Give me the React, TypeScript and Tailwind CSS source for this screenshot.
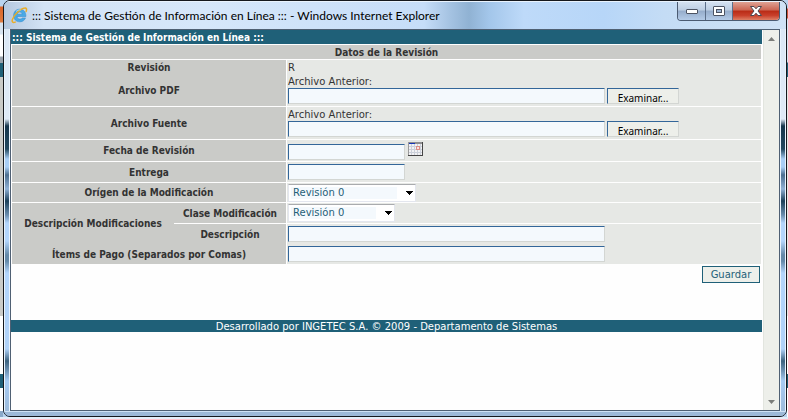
import type { ReactNode } from "react";

const label = "flex items-center justify-center bg-[#cacbc8] text-center font-bold font-['DejaVu_Sans_Condensed','DejaVu_Sans',sans-serif]";
const value = "flex flex-1 bg-[#e6e8e5]";
const box =
  "h-4 border border-t-[#336699] border-l-[#336699] border-r-[#d3d6d3] border-b-[#d3d6d3] bg-[#f4f9fd] px-1 text-[10px] text-[#336699] outline-none";

function Row({
  id,
  text,
  height,
  align = "items-center",
  children,
}: {
  id: string;
  text: string;
  height: string;
  align?: string;
  children: ReactNode;
}) {
  return (
    <div className={`flex gap-px ${height}`}>
      <label htmlFor={id} className={`${label} w-[274px] shrink-0`}>
        {text}
      </label>
      <div className={`${value} ${align} pl-px`}>{children}</div>
    </div>
  );
}

function FileField({ id }: { id: string }) {
  return (
    <div className="flex flex-col">
      <span className="leading-[13px]">Archivo Anterior:</span>
      <div className="flex gap-0.5">
        <input id={id} type="text" className={`${box} w-[317px]`} />
        <button
          type="button"
          className="h-4 w-[72px] border border-t-[#336699] border-l-[#336699] border-r-[#d3d6d3] border-b-[#d3d6d3] bg-[#edefea] pt-1 text-[10px] leading-[11px] text-black font-['Noto_Sans',sans-serif]"
        >
          Examinar...
        </button>
      </div>
    </div>
  );
}

function Combo({ id, width }: { id: string; width: string }) {
  return (
    <div className={`relative h-[18px] ${width} border border-[#e3e6ee] border-t-[#a9abae] bg-white`}>
      <select
        id={id}
        className="block h-full w-full appearance-none bg-[#f4f9fd] bg-clip-content py-0.5 pr-[18px] pl-0.5 indent-[2px] text-[10px] leading-3 text-[#1f6078] outline-none"
      >
        <option>Revisión 0</option>
      </select>
      <svg className="pointer-events-none absolute top-[6px] right-[2px]" width="8" height="4" viewBox="0 0 8 4" shapeRendering="crispEdges" aria-hidden="true">
        <path d="M0 0H8L4 4Z" fill="#000" />
      </svg>
    </div>
  );
}

function Calendar() {
  return (
    <svg width="15" height="14" viewBox="0 0 15 14" shapeRendering="crispEdges" aria-hidden="true">
      <rect width="15" height="14" fill="#f2f2f4" />
      <path d="M0 0H15V2H0Z" fill="#8e8e90" />
      <path d="M1 1H7V2H1Z" fill="#1737b8" />
      <path d="M1 4.500H14M1 7.500H14M1 10.500H14M3.500 2V13M6.500 2V13M9.500 2V13M12.500 2V13" stroke="#ccd1da" />
      <path d="M8 4H12V8H8Z" fill="#df8f87" />
      <path d="M9 5H11V7H9Z" fill="#f7e4e1" />
      <path d="M.5 0V14" stroke="#9a9a9c" />
      <path d="M14.500 0V14M0 13.500H15" stroke="#454545" />
    </svg>
  );
}

function Logo() {
  return (
    <svg width="17" height="17" viewBox="0 0 17 17" aria-hidden="true">
      <path d="M8.600 2.200C4.900 2.200 2.600 5 2.600 8.600s2.500 6.200 6.200 6.200c2.800 0 4.900-1.500 5.700-3.900h-3.300c-.5.800-1.300 1.200-2.300 1.200-1.600 0-2.700-1-2.800-2.600h8.800C15 5 12.700 2.200 8.600 2.200ZM6.200 7.200C6.500 5.800 7.400 5 8.700 5s2.200.8 2.400 2.200Z" fill="#49a9e6" stroke="#2f86c8" strokeWidth=".5" />
      <path d="M15.100 4.500C16 2.300 15.500.8 13.700 1.100 9.800 1.600 3.200 7.400 1.500 12.200.6 14.700 1.800 16.100 4.200 15.100" fill="none" stroke="#e9ad26" strokeWidth="1.500" strokeLinecap="round" />
      <path d="M5 4.500C6.500 3.200 8 2.800 9.700 3" fill="none" stroke="#b7e3fb" strokeWidth=".8" />
    </svg>
  );
}

function WindowButtons() {
  const cool = "flex h-full items-center justify-center bg-[linear-gradient(#d5e2f1_0%,#bccde2_45%,#95accb_50%,#b4cbe7_100%)]";
  return (
    <div className="flex h-[19px] w-[103px] overflow-hidden rounded-b-[4px] border border-t-0 border-[#4b5b72]">
      <button type="button" aria-label="Minimizar" className={`${cool} w-7 border-r border-[#5c6f8a]`}>
        <svg width="12" height="5" viewBox="0 0 12 5" aria-hidden="true">
          <rect x=".5" y=".5" width="11" height="4" rx=".5" fill="#fff" stroke="#4c5362" />
        </svg>
      </button>
      <button type="button" aria-label="Maximizar" className={`${cool} w-[27px] border-r border-[#5c6f8a]`}>
        <svg width="12" height="10" viewBox="0 0 12 10" aria-hidden="true">
          <rect x=".5" y=".5" width="11" height="9" rx=".5" fill="#fff" stroke="#4c5362" />
          <rect x="3.500" y="3.500" width="5" height="3" fill="#9db5d4" stroke="#4c5362" />
        </svg>
      </button>
      <button
        type="button"
        aria-label="Cerrar"
        className="flex h-full flex-1 items-center justify-center bg-[linear-gradient(#dfa294_0%,#cc6552_45%,#b92b16_50%,#c9402b_75%,#dd8066_100%)]"
      >
        <svg width="12" height="10" viewBox="0 0 12 10" aria-hidden="true">
          <path d="M.5.5H4L6 2.800 8 .5H11.500L8 5 11.500 9.500H8L6 7.200 4 9.500H.5L4 5Z" fill="#fff" stroke="#4c4650" strokeLinejoin="round" />
        </svg>
      </button>
    </div>
  );
}

const side =
  "w-1.5 shrink-0 border-x border-[#e9f3fd] bg-[linear-gradient(#dbe8f6_0px,#dfeaf6_90px,#16364c_97px,#23485f_120px,#a9cef5_130px,#a9cef5_138px,#4d6f90_146px,#8fb0d4_160px,#1c4059_172px,#6a8dae_186px,#b3d5fb_194px,#b3d5fb_212px,#6489a8_226px,#6489a8_232px,#b3d5fb_244px,#b0d2f8_320px,#3d637f_332px,#6f93b5_342px,#a6cbf3_352px,#9dbbdb_100%)]";

export default function App() {
  return (
    <div className="flex h-screen min-h-[419px] flex-col bg-[#b9d3ee] text-[10px] text-[#333] font-['DejaVu_Sans',sans-serif]">
      <div className="flex min-h-0 flex-1">
        <div className="w-[3px] shrink-0 bg-[linear-gradient(#b9d3ee_0px,#b9d3ee_6px,#d9662b_7px,#e07a3d_22px,#d8e4f0_23px,#d8e4f0_34px,#fff_35px,#fff_56px,#9aa3ad_57px,#9aa3ad_63px,#1f6078_63px,#1f6078_77px,#cacbc8_77px,#cacbc8_316px,#fff_316px,#fff_374px,#1f6078_374px,#1f6078_388px,#fff_388px,#fff_411px,#8ba9c9_411px)]" />

        <main className="flex min-w-0 flex-1 flex-col overflow-hidden rounded-[7px] border border-[#15181d] bg-[#bcd7f3]">
          <header className="flex h-7 shrink-0 items-start justify-between border-t border-[#e9f3fd] bg-[linear-gradient(90deg,#b5c8df_0px,#d3e3f5_40px,#d6e7fa_200px,#c6ddf8_420px,#a5c3e2_446px,#90b2d3_465px,#a3c6ea_485px,#bedaf9_520px,#b7d6f8_600px,#c4dcf5_660px,#cfe2f5_100%)] pr-1.5 pl-[7px]">
            <div className="flex items-center gap-1 pt-[5px]">
              <Logo />
              <h1 className="text-[12px] leading-4 text-black font-['Lato','Open_Sans',sans-serif]">
                ::: Sistema de Gestión de Información en Línea ::: - Windows Internet Explorer
              </h1>
            </div>
            <WindowButtons />
          </header>

          <div className="flex min-h-0 flex-1">
            <div className={side} />
            <div className="flex min-w-0 flex-1 border border-[#4f6073] bg-[#fefefe]">
              <div className="flex min-w-0 flex-1 flex-col pr-px">
                <h2 className="h-3.5 bg-[#1f6078] pl-px font-bold leading-[15px] text-white font-['DejaVu_Sans_Condensed','DejaVu_Sans',sans-serif]">
                  ::: Sistema de Gestión de Información en Línea :::
                </h2>
                <form className="flex flex-col px-px pt-px" onSubmit={(e) => e.preventDefault()}>
                  <div className="flex flex-col gap-px">
                    <h3 className={`${label} h-3.5`}>Datos de la Revisión</h3>
                    <div>
                      <div className="flex h-[15px] gap-px">
                        <div className={`${label} w-[274px] shrink-0`}>Revisión</div>
                        <div className={`${value} items-center pl-px`}>R</div>
                      </div>
                      <Row id="pdf" text="Archivo PDF" height="h-[31px]" align="items-end pb-0.5">
                        <FileField id="pdf" />
                      </Row>
                    </div>
                    <Row id="fuente" text="Archivo Fuente" height="h-8" align="items-end pb-0.5">
                      <FileField id="fuente" />
                    </Row>
                    <Row id="fecha" text="Fecha de Revisión" height="h-[21px]" align="items-end pb-px">
                      <input id="fecha" type="text" className={`${box} w-[117px]`} />
                      <button type="button" aria-label="Calendario" className="ml-[3px] self-start pt-0.5">
                        <Calendar />
                      </button>
                    </Row>
                    <Row id="entrega" text="Entrega" height="h-5">
                      <input id="entrega" type="text" className={`${box} w-[117px]`} />
                    </Row>
                    <Row id="origen" text="Orígen de la Modificación" height="h-[19px]" align="items-end">
                      <Combo id="origen" width="w-[128px]" />
                    </Row>
                    <div>
                      <div className="flex">
                        <div className={`${label} w-[162px] shrink-0`}>Descripción Modificaciones</div>
                        <div className="flex flex-1 flex-col gap-px">
                          <div className="flex h-5 gap-px">
                            <label htmlFor="clase" className={`${label} w-28 shrink-0`}>
                              Clase Modificación
                            </label>
                            <div className={`${value} items-center pl-px`}>
                              <Combo id="clase" width="w-[107px]" />
                            </div>
                          </div>
                          <div className="flex h-5 gap-px">
                            <label htmlFor="descripcion" className={`${label} w-28 shrink-0`}>
                              Descripción
                            </label>
                            <div className={`${value} items-center pl-px`}>
                              <input id="descripcion" type="text" className={`${box} w-[317px]`} />
                            </div>
                          </div>
                        </div>
                      </div>
                      <Row id="items" text="Ítems de Pago (Separados por Comas)" height="h-5">
                        <input id="items" type="text" className={`${box} w-[317px]`} />
                      </Row>
                    </div>
                  </div>
                  <div className="flex justify-end pt-0.5 pr-px">
                    <button type="submit" className="h-[17px] w-[58px] border border-[#1f6078] bg-[#edefea] leading-[15px] text-[#1f6078]">
                      Guardar
                    </button>
                  </div>
                </form>
                <footer className="mt-[37px] h-3 bg-[#1f6078] text-center leading-[13px] text-white">
                  Desarrollado por INGETEC S.A. © 2009 - Departamento de Sistemas
                </footer>
              </div>
              <div className="flex w-4 shrink-0 flex-col items-center justify-between border-l border-[#e2e5df] bg-[#edefea] pt-[7px] pb-1.5">
                <svg width="7" height="4" viewBox="0 0 7 4" aria-hidden="true">
                  <path d="M0 4H7L3.500 0Z" fill="#7b7d7a" />
                </svg>
                <svg width="7" height="4" viewBox="0 0 7 4" aria-hidden="true">
                  <path d="M0 0H7L3.500 4Z" fill="#7b7d7a" />
                </svg>
              </div>
            </div>
            <div className={side} />
          </div>
          <div className="h-[5px] shrink-0 border-t border-[#cfe2f5] bg-[#9db9d8]" />
        </main>

        <div className="w-px shrink-0 bg-[linear-gradient(#b9d3ee_0px,#b9d3ee_8px,#c9543a_9px,#c9543a_18px,#d8e4f0_19px,#d8e4f0_62px,#1f6078_63px,#1f6078_77px,#e6e8e5_77px,#e6e8e5_316px,#fff_316px,#fff_374px,#1f6078_374px,#1f6078_388px,#fff_388px)]" />
      </div>
      <div className="h-0.5 shrink-0 bg-[#e4eef9]" />
    </div>
  );
}
